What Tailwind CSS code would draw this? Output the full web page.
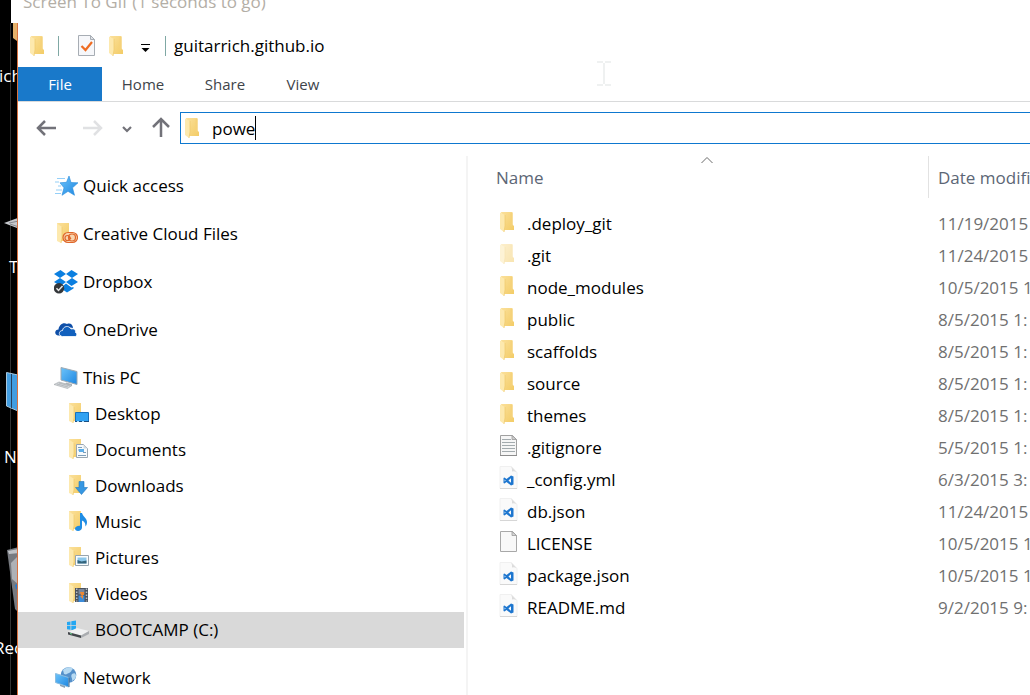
<!DOCTYPE html>
<html lang="en">
<head>
<meta charset="utf-8">
<title>guitarrich.github.io</title>
<script src="https://cdn.jsdelivr.net/npm/@tailwindcss/browser@4"></script>
</head>
<body class="flex h-screen flex-col overflow-hidden bg-black font-['Open_Sans','Noto_Sans',sans-serif] text-[17px] text-black">

<svg class="absolute size-0" aria-hidden="true">
  <defs>
    <linearGradient id="gold" x1="0" x2="1" y1="0" y2="1"><stop offset="0" stop-color="#fbe09a"/><stop offset="1" stop-color="#f3cc66"/></linearGradient>
    <linearGradient id="sky" x1="0" x2="1" y1="0" y2="1"><stop offset="0" stop-color="#6cc4fb"/><stop offset="1" stop-color="#1e86e0"/></linearGradient>
    <symbol id="folder" viewBox="0 0 24 24">
      <path d="M5 2h11.500v12.500l1.500 1.500v4H8z" fill="url(#gold)"/>
      <path d="M14.500 3v13l2 .500V3z" fill="#f5d27a"/>
      <path d="M4 2.500l5 2.500v11l-1 6-4-3z" fill="#fde9ae"/>
      <path d="M9 5v11l-1 6" fill="none" stroke="#f0cb70" stroke-width=".8"/>
    </symbol>
    <symbol id="subfolder" viewBox="0 0 24 24">
      <path d="M3 1h12v18H7z" fill="url(#gold)"/>
      <path d="M3 1.500L8 5v11l-1 5-4-2z" fill="#fde9ae"/>
      <path d="M8 5v11l-1 5" fill="none" stroke="#f0cb70" stroke-width=".8"/>
    </symbol>
    <symbol id="textfile" viewBox="0 0 24 24">
      <path d="M4.500 1.500h12l4 4v16h-16z" fill="#f6f6f6" stroke="#a0a0a0"/>
      <path d="M16 1.500v4h4.500z" fill="#d0d0d0" stroke="#9a9a9a" stroke-width=".8"/>
      <path d="M6 5.500h9M6 8.500h13M6 11.500h13M6 14.500h13M6 17.500h13" stroke="#a3abae"/>
      <path d="M4 21.500h17" stroke="#8c8c8c"/>
    </symbol>
    <symbol id="blankfile" viewBox="0 0 24 24">
      <path d="M4.500 1.500h12l4 4v16h-16z" fill="#f8f8f8" stroke="#a8a8a8"/>
      <path d="M16 1.500v4h4.500z" fill="#d8d8d8" stroke="#9a9a9a" stroke-width=".8"/>
    </symbol>
    <symbol id="codefile" viewBox="0 0 24 24">
      <path d="M4 .500h11.500l5.500 6v16H4z" fill="#fafafa" stroke="#f0f0f0"/>
      <path d="M4 22.500h17" stroke="#d6d6d6"/>
      <path d="M15 .500l6 6q-3-2-5-1 .300-3-1-5z" fill="#dcdcdc"/>
      <path d="M15 9.500l2.500 1v8l-2.500 1-4.500-3.600-2 1.700-1-.600v-5l1-.600 2 1.700zM15 12.300l-2.600 2.200 2.600 2.200zM8.600 13.400v2.200l1.100-1.100z" fill="#1d76cf" fill-rule="evenodd"/>
    </symbol>
    <symbol id="checkfile" viewBox="0 0 24 24">
      <path d="M3.500 1.500h12l4 4v16h-16z" fill="#f6f7fa" stroke="#a7adb4"/>
      <path d="M15.500 1.500v4h4z" fill="#dfe2e7" stroke="#a7adb4"/>
      <path d="M6.500 12l4 4L17 8" fill="none" stroke="#ee6c22" stroke-width="2.200"/>
    </symbol>
    <symbol id="star" viewBox="0 0 24 24">
      <path d="M15 2l2 6.500 7 .3-5.500 5 2 7.500-6.500-4-6 4 2-7.500-4-5 6.500-.5z" fill="url(#sky)" stroke="#2589dc" stroke-width=".6"/>
      <path d="M3 4.500h8M1 8h4M4 12h3M2 16h6M1 19.500h6" stroke="#94cff8" stroke-width="1.200"/>
    </symbol>
    <symbol id="cloudfiles" viewBox="0 0 24 24">
      <use href="#subfolder" width="24" height="24"/>
      <g fill="none" stroke="#df672b" stroke-width="1.200"><rect x="9" y="10.500" width="14.500" height="10" rx="5" fill="#f8d5b0"/><circle cx="18" cy="15.500" r="3.500"/><circle cx="13.500" cy="16" r="2.500"/><path d="M15 15l2 2"/></g>
    </symbol>
    <symbol id="dropbox" viewBox="0 0 24 24">
      <g fill="#0b7fe0"><path d="M6.500 0L12 4 6 8 0 4zM17.500 0L24 4l-6 4-6-4zM6 8l6 4-5.500 4L0 12zM18 8l6 4-6.500 4L12 12zM12 13.500l5.500 4 2-.5v1.500L13 22.500 6.500 18z"/></g>
      <circle cx="5" cy="18.300" r="5.200" fill="#34373a"/><path d="M2.500 18.300l2 2.200 4-4.500" fill="none" stroke="#e8e8e8" stroke-width="1.500"/>
    </symbol>
    <symbol id="onedrive" viewBox="0 0 24 24">
      <path d="M4 17.500c-4-1-3.500-6 .5-6C5 7 9 4 13 6c3-1.500 6 .5 6 4l-6-1-5 4-2 4.500z" fill="#0f4fa8"/>
      <path d="M8.500 18.500c-4.500-.5-4-6 0-6C9 8 15 7 17 11c3-.8 5 1 4.500 3.500 2 .8 1.500 4-.5 4z" fill="#1160bd" stroke="#fff" stroke-width=".8"/>
    </symbol>
    <symbol id="computer" viewBox="0 0 24 24">
      <path d="M7 1.500l16 4v13L7 14z" fill="url(#sky)" stroke="#9ea9b2"/>
      <path d="M12 16.500l6 1.500v2l-7-1z" fill="#aeb5bb"/>
      <path d="M5 16l13 3.500-4.500 3L0 18.500z" fill="#d4d8db" stroke="#9fa4a8" stroke-width=".6"/>
      <path d="M3 18l11 3M5 17l11 3" stroke="#9fa4a8" stroke-width=".6"/>
    </symbol>
    <symbol id="desktop" viewBox="0 0 24 24">
      <use href="#subfolder" width="24" height="24"/>
      <path d="M9.500 10.500h13v9h-13z" fill="#31a2f2" stroke="#1670bd"/><path d="M9 19.500h14" stroke="#1a4f82"/><path d="M11 19.500h2M16 19.500h2" stroke="#a9defc"/>
    </symbol>
    <symbol id="documents" viewBox="0 0 24 24">
      <use href="#subfolder" width="24" height="24"/>
      <path d="M10.500 6.500h7l4 4v9h-11z" fill="#f7fafc" stroke="#9aa6b0"/><path d="M17.500 6.500v4h4z" fill="#d3dae0"/>
      <path d="M12 9.500h4M12 12h2M17 14.500h3M12 17.500h8" stroke="#7d9db8"/><path d="M13 11h5v3h-5z" fill="#5daee8"/>
    </symbol>
    <symbol id="downloads" viewBox="0 0 24 24">
      <use href="#subfolder" width="24" height="24"/>
      <path d="M13 7.500h5v6h3.500l-6 7-6-7H13z" fill="#3697e2" stroke="#2479c0" stroke-width=".6"/>
    </symbol>
    <symbol id="music" viewBox="0 0 24 24">
      <use href="#subfolder" width="24" height="24"/>
      <path d="M14 3h2c1 4 5 5 5 9 0 2-.5 3-1.500 4.500 0-4-1.500-5-3.500-6v7c0 2-2 3.500-4 3.500s-3-1-3-2.500 2-3 5-2.800z" fill="#1f8de4"/>
    </symbol>
    <symbol id="pictures" viewBox="0 0 24 24">
      <use href="#subfolder" width="24" height="24"/>
      <path d="M9.500 9.500h13v10h-13z" fill="#fbfdfe" stroke="#98a5ae"/><path d="M11.500 11.500h9v6h-9z" fill="#8cc7ea"/><path d="M11.500 14l4 1.500 5-1v3h-9z" fill="#34657d"/>
    </symbol>
    <symbol id="videos" viewBox="0 0 24 24">
      <use href="#subfolder" width="24" height="24"/>
      <path d="M9 6h13v14H9z" fill="#49505c"/><path d="M12.500 7h6v5.500h-6z" fill="#79869b"/><path d="M12.500 13.500h6V20h-6z" fill="#3c8cda"/><path d="M14 10h4v3h-3zM14 14l3-1v4z" fill="#ee8732"/>
      <path d="M10.700 6.500v13M20.500 6.500v13" stroke="#b6bdc6" stroke-width="1.500" stroke-dasharray="1.500 1.500"/>
    </symbol>
    <symbol id="drive" viewBox="0 0 24 24">
      <path d="M1 4l3.500-.6v3.800H1zM5.300 3.200L10 2.500v4.700H5.300zM1 8h3.500v3.800L1 11.300zM5.300 8H10v4.600L5.300 12z" fill="#24a7f2"/>
      <path d="M2 14l9-4 12 3-8 4.500z" fill="#f0f1f2"/><path d="M2 14l13 3.500v2.500L2 16.500z" fill="#43474b"/><path d="M15 17.500l8-4.500v3l-8 4z" fill="#a9acb0"/><path d="M4 15.500l2 .5" stroke="#6ddb94"/>
    </symbol>
    <symbol id="network" viewBox="0 0 24 24">
      <circle cx="14.500" cy="9" r="7.800" fill="#5590ca"/><path d="M9 4c4-4 9-3 10-1-2 1-1 3-4 4s-2 2-5 1zM18 8c3-2 4 0 4 2s-2 4-4 5c1-3-2-4 0-7z" fill="#b7daf2"/>
      <path d="M1.500 7.500l13 4v9.500l-13-4.500z" fill="url(#sky)" stroke="#8bbde0"/><path d="M14.500 11.500l1 .5v9h-1z" fill="#33658f"/><path d="M6 18.500l5 1.500v2l-5-2z" fill="#8ca2b4"/>
    </symbol>
  </defs>
</svg>

<!-- Recorder window, above -->
<header class="ml-[11px] h-[23px] shrink-0 overflow-hidden bg-white pl-3 text-[17px] leading-[24px] text-[#b3aea6]">
  <p class="-mt-2.5 whitespace-nowrap">Screen To Gif (1 seconds to go)</p>
</header>

<div class="flex min-h-0 flex-1">
  <!-- Strip of the desktop left of the window -->
  <aside class="relative w-[18px] shrink-0 overflow-hidden border-r border-[#d9713f] bg-black text-white" aria-label="Desktop">
    <div class="absolute inset-y-0 left-[10px] w-px bg-[#333]"></div>
    <svg class="absolute top-0 left-[13px] h-[18px] w-1" viewBox="0 0 4 18"><path d="M0 0h4v18l-4-3z" fill="#e5b16a"/></svg>
    <span class="absolute top-10 -left-px text-[17px]">ich</span>
    <svg class="absolute top-[193px] left-1 h-4 w-4" viewBox="0 0 16 16"><path d="M0 7L16 1v12z" fill="#c6c8cc"/><path d="M5 7l10-2M6 8l9 3" stroke="#85888d"/></svg>
    <span class="absolute top-[231px] left-[9px] text-[17px]">T</span>
    <svg class="absolute top-[349px] left-1.5 h-10 w-3" viewBox="0 0 12 40"><path d="M.5.500L12 3v36L.5 34z" fill="#429de0" stroke="#a9c7dc"/><path d="M5.500 2v34" stroke="#27415c"/></svg>
    <span class="absolute top-[421px] left-1 text-[17px]">N</span>
    <svg class="absolute top-[524px] left-[7px] h-[66px] w-3" viewBox="0 0 12 66"><path d="M0 3l12-3v66L8 62z" fill="#777a80"/><path d="M1 4l11-2v4l-10 1z" fill="#bfc2c6"/><path d="M4 16l8-8v30l-7-6z" fill="#aeb1b6"/><path d="M8 38l4-2v7l-3-1z" fill="#2a7ccd"/></svg>
    <span class="absolute top-[612px] -left-1.5 text-[17px]">Rec</span>
  </aside>

  <main class="flex min-w-0 flex-1 flex-col bg-white">
    <!-- Title bar -->
    <div class="flex h-11 shrink-0 items-center pt-px pl-2">
      <svg class="size-6"><use href="#folder"/></svg>
      <span class="ml-2 h-5 w-px bg-[#7fa8a4]"></span>
      <button class="ml-4" aria-label="Properties"><svg class="size-6"><use href="#checkfile"/></svg></button>
      <button class="ml-1.5" aria-label="New folder"><svg class="size-6"><use href="#folder"/></svg></button>
      <button class="ml-2 pt-1" aria-label="Customize toolbar"><svg class="size-4" viewBox="0 0 16 16"><path d="M4 4.500h9" stroke="#000"/><path d="M4.500 8h8l-4 4z"/></svg></button>
      <span class="ml-3 h-5 w-px bg-[#7fa8a4]"></span>
      <h1 class="ml-2 text-[17px]">guitarrich.github.io</h1>
    </div>

    <!-- Ribbon tabs -->
    <nav class="flex h-[35px] shrink-0 border-b border-[#d9dadb] text-[15px] text-[#40444a]" aria-label="Ribbon">
      <button class="h-[34px] w-[84px] bg-[#1979ca] text-white">File</button>
      <button class="h-[34px] w-[82px]">Home</button>
      <button class="h-[34px] w-[82px]">Share</button>
      <button class="h-[34px] w-[74px]">View</button>
    </nav>

    <!-- Address bar -->
    <div class="flex shrink-0 items-center pt-2.5 pb-3">
      <button class="ml-[18px]" aria-label="Back"><svg class="h-6 w-5" viewBox="0 0 20 24" fill="none" stroke="#727279" stroke-width="2.500"><path d="M1.500 12H20M9 5l-7 7 7 7"/></svg></button>
      <button class="ml-[27px]" aria-label="Forward"><svg class="h-6 w-5" viewBox="0 0 20 24" fill="none" stroke="#e0e1e3" stroke-width="2.500"><path d="M0 12h18.500M11 5l7 7-7 7"/></svg></button>
      <button class="ml-[18px]" aria-label="Recent locations"><svg class="h-6 w-3" viewBox="0 0 12 24" fill="none" stroke="#727279" stroke-width="2.200"><path d="M2 11l4 4 4-4"/></svg></button>
      <button class="ml-[18px]" aria-label="Up"><svg class="h-6 w-5" viewBox="0 0 20 24" fill="none" stroke="#727279" stroke-width="2.500"><path d="M10 21V3M2 11l8-8 8 8"/></svg></button>
      <label class="ml-[9px] flex h-8 min-w-0 flex-1 items-center border border-r-0 border-[#0e78cf]">
        <svg class="size-6 shrink-0"><use href="#folder"/></svg>
        <input class="ml-[7px] field-sizing-content pt-0.5 outline-none" aria-label="Address" value="powe">
        <span class="h-6 w-px bg-black"></span>
      </label>
    </div>

    <div class="flex min-h-0 flex-1">
      <!-- Navigation pane -->
      <nav class="w-[450px] shrink-0 overflow-hidden border-r-2 border-[#f4f4f4] pr-[2px]" aria-label="Locations">
        <ul class="whitespace-nowrap">
          <li class="mt-3"><a href="#" class="flex h-9 items-center gap-[5px] pl-9"><svg class="size-6"><use href="#star"/></svg>Quick access</a></li>
          <li class="mt-3"><a href="#" class="flex h-9 items-center gap-[5px] pl-9"><svg class="size-6"><use href="#cloudfiles"/></svg>Creative Cloud Files</a></li>
          <li class="mt-3"><a href="#" class="flex h-9 items-center gap-[5px] pl-9"><svg class="size-6"><use href="#dropbox"/></svg>Dropbox</a></li>
          <li class="mt-3"><a href="#" class="flex h-9 items-center gap-[5px] pl-9"><svg class="size-6"><use href="#onedrive"/></svg>OneDrive</a></li>
          <li class="mt-3"><a href="#" class="flex h-9 items-center gap-[5px] pl-9"><svg class="size-6"><use href="#computer"/></svg>This PC</a>
            <ul>
              <li><a href="#" class="flex h-9 items-center gap-[5px] pl-12"><svg class="size-6"><use href="#desktop"/></svg>Desktop</a></li>
              <li><a href="#" class="flex h-9 items-center gap-[5px] pl-12"><svg class="size-6"><use href="#documents"/></svg>Documents</a></li>
              <li><a href="#" class="flex h-9 items-center gap-[5px] pl-12"><svg class="size-6"><use href="#downloads"/></svg>Downloads</a></li>
              <li><a href="#" class="flex h-9 items-center gap-[5px] pl-12"><svg class="size-6"><use href="#music"/></svg>Music</a></li>
              <li><a href="#" class="flex h-9 items-center gap-[5px] pl-12"><svg class="size-6"><use href="#pictures"/></svg>Pictures</a></li>
              <li><a href="#" class="flex h-9 items-center gap-[5px] pl-12"><svg class="size-6"><use href="#videos"/></svg>Videos</a></li>
              <li><a href="#" class="flex h-9 items-center gap-[5px] bg-[#d9d9d9] pl-12" aria-current="true"><svg class="size-6"><use href="#drive"/></svg>BOOTCAMP (C:)</a></li>
            </ul>
          </li>
          <li class="mt-3"><a href="#" class="flex h-9 items-center gap-[5px] pl-9"><svg class="size-6"><use href="#network"/></svg>Network</a></li>
        </ul>
      </nav>

      <!-- File list -->
      <section class="min-w-0 flex-1 overflow-hidden pl-[18px]" aria-label="Files">
        <table class="w-full table-fixed border-separate border-spacing-0 text-left whitespace-nowrap">
          <thead class="text-[#5c6675]">
            <tr class="h-[42px]">
              <th class="relative w-[442px] pt-0.5 pl-2.5 font-normal">Name
                <svg class="absolute top-0 left-1/2 h-2 w-3 -translate-x-1/2" viewBox="0 0 12 8" fill="none" stroke="#6b6b6b"><path d="M.5 7L6 1.500 11.500 7"/></svg>
              </th>
              <th class="border-l border-[#e2e2e2] pt-0.5 pl-[9px] font-normal">Date modified</th>
            </tr>
          </thead>
          <tbody class="before:block before:h-2.5">
            <tr class="h-8"><td class="pl-2.5"><div class="flex items-center gap-[7px]"><svg class="mb-1 size-6"><use href="#folder"/></svg>.deploy_git</div></td><td class="pl-2.5 text-[#707070]">11/19/2015</td></tr>
            <tr class="h-8"><td class="pl-2.5"><div class="flex items-center gap-[7px]"><svg class="mb-1 size-6 opacity-50"><use href="#folder"/></svg>.git</div></td><td class="pl-2.5 text-[#707070]">11/24/2015</td></tr>
            <tr class="h-8"><td class="pl-2.5"><div class="flex items-center gap-[7px]"><svg class="mb-1 size-6"><use href="#folder"/></svg>node_modules</div></td><td class="pl-2.5 text-[#707070]">10/5/2015 1</td></tr>
            <tr class="h-8"><td class="pl-2.5"><div class="flex items-center gap-[7px]"><svg class="mb-1 size-6"><use href="#folder"/></svg>public</div></td><td class="pl-2.5 text-[#707070]">8/5/2015 1:</td></tr>
            <tr class="h-8"><td class="pl-2.5"><div class="flex items-center gap-[7px]"><svg class="mb-1 size-6"><use href="#folder"/></svg>scaffolds</div></td><td class="pl-2.5 text-[#707070]">8/5/2015 1:</td></tr>
            <tr class="h-8"><td class="pl-2.5"><div class="flex items-center gap-[7px]"><svg class="mb-1 size-6"><use href="#folder"/></svg>source</div></td><td class="pl-2.5 text-[#707070]">8/5/2015 1:</td></tr>
            <tr class="h-8"><td class="pl-2.5"><div class="flex items-center gap-[7px]"><svg class="mb-1 size-6"><use href="#folder"/></svg>themes</div></td><td class="pl-2.5 text-[#707070]">8/5/2015 1:</td></tr>
            <tr class="h-8"><td class="pl-2.5"><div class="flex items-center gap-[7px]"><svg class="mb-1 size-6"><use href="#textfile"/></svg>.gitignore</div></td><td class="pl-2.5 text-[#707070]">5/5/2015 1:</td></tr>
            <tr class="h-8"><td class="pl-2.5"><div class="flex items-center gap-[7px]"><svg class="mb-1 size-6"><use href="#codefile"/></svg>_config.yml</div></td><td class="pl-2.5 text-[#707070]">6/3/2015 3:</td></tr>
            <tr class="h-8"><td class="pl-2.5"><div class="flex items-center gap-[7px]"><svg class="mb-1 size-6"><use href="#codefile"/></svg>db.json</div></td><td class="pl-2.5 text-[#707070]">11/24/2015</td></tr>
            <tr class="h-8"><td class="pl-2.5"><div class="flex items-center gap-[7px]"><svg class="mb-1 size-6"><use href="#blankfile"/></svg>LICENSE</div></td><td class="pl-2.5 text-[#707070]">10/5/2015 1</td></tr>
            <tr class="h-8"><td class="pl-2.5"><div class="flex items-center gap-[7px]"><svg class="mb-1 size-6"><use href="#codefile"/></svg>package.json</div></td><td class="pl-2.5 text-[#707070]">10/5/2015 1</td></tr>
            <tr class="h-8"><td class="pl-2.5"><div class="flex items-center gap-[7px]"><svg class="mb-1 size-6"><use href="#codefile"/></svg>README.md</div></td><td class="pl-2.5 text-[#707070]">9/2/2015 9:</td></tr>
          </tbody>
        </table>
      </section>
    </div>
  </main>
</div>

<!-- Text cursor over the window -->
<svg class="pointer-events-none absolute top-[61px] left-[597px] h-[25px] w-[14px]" viewBox="0 0 14 25" fill="none" stroke="#eff1f1" stroke-width="2"><path d="M0 1h6M8 1h6M0 24h6M8 24h6M7 2v21"/></svg>
</body>
</html>
